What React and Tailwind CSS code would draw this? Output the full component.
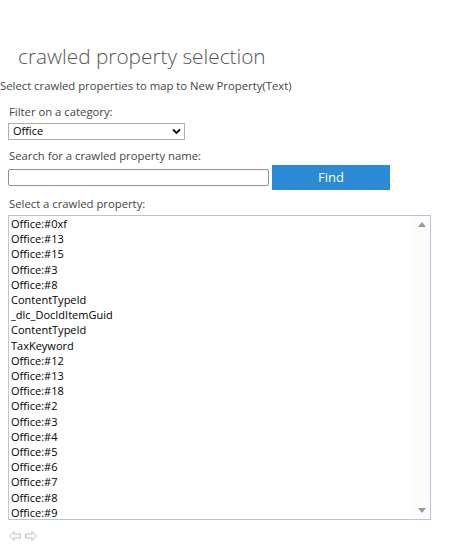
import React from 'react';

const items = [
  'Office:#0xf',
  'Office:#13',
  'Office:#15',
  'Office:#3',
  'Office:#8',
  'ContentTypeId',
  '_dlc_DocIdItemGuid',
  'ContentTypeId',
  'TaxKeyword',
  'Office:#12',
  'Office:#13',
  'Office:#18',
  'Office:#2',
  'Office:#3',
  'Office:#4',
  'Office:#5',
  'Office:#6',
  'Office:#7',
  'Office:#8',
  'Office:#9',
];

const App = () => {
  return (
    <div className="w-[450px] h-[545px] bg-white text-[#444] font-['Open_Sans',sans-serif] overflow-hidden">
      {/* Title */}
      <h1 className="pt-[40px] pl-[18px] text-[20.8px] leading-[32px] font-light text-[#555]">
        crawled property selection
      </h1>
      <p className="mt-[6px] text-[11.3px] leading-[16px] text-[#444]">
        Select crawled properties to map to New Property(Text)
      </p>

      <div className="pl-[8px] pt-[10px]">
        {/* Category */}
        <div className="pl-[1px] text-[11.3px] leading-[16px]">Filter on a category:</div>
        <div className="mt-[3px] w-[177px] h-[17px] border border-[#abadb3] flex items-center justify-between pl-[4px] pr-[3px] text-[11px] text-black">
          <span>Office</span>
          <svg width="9" height="7" viewBox="0 0 9 7">
            <path d="M1 1.5 L4.5 5 L8 1.5" fill="none" stroke="#111" strokeWidth="1.8" />
          </svg>
        </div>

        {/* Search */}
        <div className="mt-[8px] pl-[1px] text-[11.3px] leading-[16px]">Search for a crawled property name:</div>
        <div className="mt-[1px] flex items-center gap-[3px]">
          <div className="w-[261px] h-[17px] border border-[#8f8f8f] rounded-[2px] bg-white" />
          <button className="w-[118px] h-[25px] bg-[#2a8ad4] text-white text-[13px] border border-[#2a8ad4]">
            Find
          </button>
        </div>

        {/* List */}
        <div className="mt-[6px] pl-[1px] text-[11.3px] leading-[16px]">Select a crawled property:</div>
        <div className="mt-[3px] w-[423px] h-[305px] border border-[#b5c6d6] flex">
          <div className="flex-1 pl-[2px] text-[11px] leading-[15.2px] text-black">
            {items.map((it, i) => (
              <div key={i}>{it}</div>
            ))}
          </div>
          <div className="w-[17px] bg-[#fcfcfc] flex flex-col items-center justify-between py-[6px]">
            <svg width="8" height="5" viewBox="0 0 8 5">
              <path d="M0 5 L4 0 L8 5 Z" fill="#9a9a9a" />
            </svg>
            <svg width="8" height="5" viewBox="0 0 8 5">
              <path d="M0 0 L4 5 L8 0 Z" fill="#9a9a9a" />
            </svg>
          </div>
        </div>

        {/* Arrows */}
        <div className="mt-[11px] pl-[1px] flex gap-[4px]">
          <svg width="12" height="10" viewBox="0 0 12 10">
            <path d="M0.5 5 L5 0.5 L5 3 L11.5 3 L11.5 7 L5 7 L5 9.5 Z" fill="#fff" stroke="#bdbdbd" strokeWidth="1" />
          </svg>
          <svg width="12" height="10" viewBox="0 0 12 10">
            <path d="M11.5 5 L7 0.5 L7 3 L0.5 3 L0.5 7 L7 7 L7 9.5 Z" fill="#fff" stroke="#bdbdbd" strokeWidth="1" />
          </svg>
        </div>
      </div>
    </div>
  );
};

export default App;
